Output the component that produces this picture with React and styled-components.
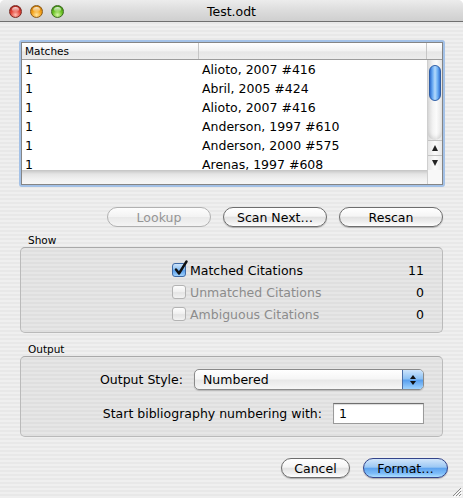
import React from "react";
import styled, { createGlobalStyle } from "styled-components";

const GlobalStyle = createGlobalStyle`
  html, body {
    margin: 0;
    padding: 0;
    background: #ffffff;
  }
`;

const Window = styled.div`
  position: relative;
  width: 463px;
  height: 498px;
  overflow: hidden;
  display: flex;
  flex-direction: column;
  border-radius: 5px 5px 0 0;
  font-family: "DejaVu Sans", "Liberation Sans", sans-serif;
  font-size: 12.5px;
  color: #000;
  background: repeating-linear-gradient(#efefef 0 2px, #e8e8e8 2px 4px);
`;

const TitleBar = styled.div`
  height: 21px;
  flex-shrink: 0;
  display: grid;
  grid-template-columns: 1fr auto 1fr;
  align-items: center;
  border-bottom: 1px solid #6f6f6f;
  background: linear-gradient(#ececec, #dcdcdc 50%, #cfcfcf);
`;

const Lights = styled.div`
  display: flex;
  gap: 8px;
  padding: 2px 0 0 9px;
`;

const lightColors = {
  red: ["#ffc0b4", "#e4473c", "#9c1910", "#7a2a24"],
  amber: ["#ffe6a0", "#f4a21a", "#b86a00", "#8a5a18"],
  green: ["#d8f7a8", "#6cc326", "#2f7d0a", "#3c6a1e"],
};

const Light = styled.span`
  position: relative;
  width: 13px;
  height: 13px;
  box-sizing: border-box;
  border-radius: 50%;
  border: 1px solid ${(p) => lightColors[p.$c][3]};
  background: radial-gradient(
    circle at 50% 80%,
    ${(p) => lightColors[p.$c][0]} 0,
    ${(p) => lightColors[p.$c][1]} 45%,
    ${(p) => lightColors[p.$c][2]} 100%
  );
  &::after {
    content: "";
    position: absolute;
    left: 2px;
    right: 2px;
    top: 1px;
    height: 5px;
    border-radius: 50%;
    background: linear-gradient(rgba(255, 255, 255, 0.85), rgba(255, 255, 255, 0.1));
  }
`;

const Title = styled.div`
  font-size: 12.5px;
  padding-top: 1px;
`;

const ListFrame = styled.div`
  margin: 18px 0 0 19px;
  width: 426px;
  height: 147px;
  box-sizing: border-box;
  border: 2px solid #a3c1e7;
  border-radius: 3px;
  flex-shrink: 0;
`;

const ListInner = styled.div`
  height: 100%;
  box-sizing: border-box;
  border: 1px solid #858585;
  background: #fff;
  display: flex;
  flex-direction: column;
`;

const HeaderRow = styled.div`
  display: grid;
  grid-template-columns: 177px 1fr 15px;
  height: 16px;
  border-bottom: 1px solid #9c9c9c;
  background: linear-gradient(#ffffff, #f1f1f1 50%, #e6e6e6 55%, #ececec);
  font-size: 10.5px;
  line-height: 16px;
`;

const HeaderCell = styled.div`
  padding-left: 3px;
  border-right: ${(p) => (p.$last ? "none" : "1px solid #c6c6c6")};
`;

const ListBody = styled.div`
  height: 110px;
  display: flex;
`;

const Rows = styled.div`
  flex: 1;
  overflow: hidden;
`;

const Row = styled.div`
  display: grid;
  grid-template-columns: 177px 1fr;
  height: 19px;
  line-height: 19px;
`;

const Cell = styled.div`
  padding-left: 3px;
  white-space: nowrap;
`;

const Scrollbar = styled.div`
  width: 15px;
  display: flex;
  flex-direction: column;
  border-left: 1px solid #cfcfcf;
  box-sizing: border-box;
  background: linear-gradient(90deg, #d9d9d9, #f3f3f3 35%, #fbfbfb 60%, #e4e4e4);
`;

const Thumb = styled.div`
  margin: 5px 1px 0 1px;
  height: 36px;
  box-sizing: border-box;
  border-radius: 7px;
  border: 1px solid #2f5fa8;
  background: linear-gradient(
    90deg,
    #2f6fd0,
    #6aaaf2 25%,
    #b4dafc 50%,
    #6fb0f4 75%,
    #3474d4
  );
`;

const Track = styled.div`
  flex: 1;
  border-bottom-left-radius: 7px;
  border-bottom-right-radius: 7px;
  box-shadow: inset 0 -4px 4px -2px rgba(0, 0, 0, 0.12);
`;

const ArrowBox = styled.div`
  height: 15px;
  display: flex;
  align-items: center;
  justify-content: center;
  border-top: 1px solid #c2c2c2;
  box-sizing: border-box;
  background: linear-gradient(90deg, #e6e6e6, #fbfbfb 50%, #e8e8e8);
  &::before {
    content: "";
    border-left: 3.5px solid transparent;
    border-right: 3.5px solid transparent;
    ${(p) =>
      p.$dir === "up"
        ? "border-bottom: 6px solid #222;"
        : "border-top: 6px solid #222;"}
  }
`;

const BottomBand = styled.div`
  height: 14px;
  display: grid;
  grid-template-columns: 1fr 15px;
`;

const BandTrack = styled.div`
  background: linear-gradient(#c4c4c4, #e4e4e4 4px, #f1f1f1 9px, #f6f6f6);
`;

const BandCorner = styled.div`
  border-left: 1px solid #cfcfcf;
  background: #f8f8f8;
`;

const ButtonRow = styled.div`
  display: flex;
  justify-content: flex-end;
  gap: ${(p) => p.$gap}px;
  padding-right: ${(p) => p.$right}px;
  margin-top: ${(p) => p.$top}px;
  flex-shrink: 0;
`;

const AquaButton = styled.div`
  width: ${(p) => p.$w}px;
  height: 20px;
  box-sizing: border-box;
  border-radius: 10px;
  display: flex;
  align-items: center;
  justify-content: center;
  font-size: 12.5px;
  color: ${(p) => (p.$disabled ? "#959595" : "#000")};
  border: 1px solid
    ${(p) => (p.$default ? "#34448a" : p.$disabled ? "#b1b1b1" : "#6e6e6e")};
  background: ${(p) =>
    p.$default
      ? "linear-gradient(#d2e6fb, #9cc8f4 45%, #5fa4ef 52%, #7dbcf8 80%, #aee0ff)"
      : p.$disabled
      ? "linear-gradient(#fdfdfd, #f3f3f3 48%, #e9e9e9 52%, #f4f4f4)"
      : "linear-gradient(#ffffff, #f5f5f5 45%, #e2e2e2 52%, #f0f0f0 80%, #ffffff)"};
  box-shadow: ${(p) =>
    p.$disabled ? "none" : "0 1px 1px rgba(0, 0, 0, 0.25)"};
`;

const GroupLabel = styled.div`
  margin: ${(p) => p.$top}px 0 0 28px;
  height: 13px;
  line-height: 13px;
  font-size: 10.5px;
  flex-shrink: 0;
`;

const Group = styled.div`
  margin: 0 20px;
  height: ${(p) => p.$h}px;
  box-sizing: border-box;
  border: 1px solid #bababa;
  border-top-color: #a9a9a9;
  border-radius: 5px;
  background: rgba(0, 0, 0, 0.035);
  flex-shrink: 0;
`;

const ShowGrid = styled.div`
  display: grid;
  grid-template-columns: 1fr auto;
  grid-auto-rows: 22px;
  align-items: center;
  padding: 11px 18px 0 151px;
`;

const CheckRow = styled.div`
  display: flex;
  align-items: center;
  gap: 4px;
  color: ${(p) => (p.$disabled ? "#8c8c8c" : "#000")};
`;

const Box = styled.span`
  position: relative;
  width: 14px;
  height: 14px;
  box-sizing: border-box;
  border-radius: 3px;
  border: 1px solid ${(p) => (p.$checked ? "#3f6aa6" : "#b3b3b3")};
  background: ${(p) =>
    p.$checked
      ? "linear-gradient(#cfe5fb, #8cc0f2 45%, #5a9fec 55%, #9fd0fb)"
      : "linear-gradient(#fdfdfd, #efefef 50%, #e4e4e4 55%, #f2f2f2)"};
`;

const CheckMark = styled.svg`
  position: absolute;
  left: 1px;
  top: -4px;
`;

const Count = styled.div`
  text-align: right;
`;

const OutputRows = styled.div`
  display: flex;
  flex-direction: column;
  gap: 13px;
  padding: 12px 18px 0 0;
`;

const FieldRow = styled.div`
  display: flex;
  justify-content: flex-end;
  align-items: center;
  gap: 11px;
  height: 21px;
`;

const Popup = styled.div`
  width: 230px;
  height: 21px;
  box-sizing: border-box;
  border: 1px solid #8a8a8a;
  border-radius: 5px;
  display: flex;
  overflow: hidden;
  background: linear-gradient(#ffffff, #f6f6f6 45%, #e8e8e8 55%, #f6f6f6);
  box-shadow: 0 1px 1px rgba(0, 0, 0, 0.18);
`;

const PopupText = styled.div`
  flex: 1;
  padding-left: 8px;
  line-height: 19px;
`;

const Stepper = styled.div`
  width: 20px;
  border-left: 1px solid #4b6fa8;
  display: flex;
  flex-direction: column;
  align-items: center;
  justify-content: center;
  gap: 2px;
  background: linear-gradient(#cde4fb, #8ec2f4 45%, #5aa0ee 55%, #9fd3ff);
  &::before,
  &::after {
    content: "";
    border-left: 3px solid transparent;
    border-right: 3px solid transparent;
  }
  &::before {
    border-bottom: 4px solid #111;
  }
  &::after {
    border-top: 4px solid #111;
  }
`;

const NumberInput = styled.div`
  width: 91px;
  height: 21px;
  box-sizing: border-box;
  border: 1px solid #9a9a9a;
  border-top-color: #6f6f6f;
  background: #fff;
  box-shadow: inset 0 1px 1px rgba(0, 0, 0, 0.15);
  padding-left: 5px;
  line-height: 19px;
`;

const Grip = styled.svg`
  position: absolute;
  right: 1px;
  bottom: 1px;
`;

const rows = [
  ["1", "Alioto, 2007 #416"],
  ["1", "Abril, 2005 #424"],
  ["1", "Alioto, 2007 #416"],
  ["1", "Anderson, 1997 #610"],
  ["1", "Anderson, 2000 #575"],
  ["1", "Arenas, 1997 #608"],
];

const citations = [
  { label: "Matched Citations", count: 11, checked: true },
  { label: "Unmatched Citations", count: 0, disabled: true },
  { label: "Ambiguous Citations", count: 0, disabled: true },
];

const App = () => {
  return (
    <Window>
      <GlobalStyle />
      <TitleBar>
        <Lights>
          <Light $c="red" />
          <Light $c="amber" />
          <Light $c="green" />
        </Lights>
        <Title>Test.odt</Title>
        <div />
      </TitleBar>

      <ListFrame>
        <ListInner>
          <HeaderRow>
            <HeaderCell>Matches</HeaderCell>
            <HeaderCell />
            <HeaderCell $last />
          </HeaderRow>
          <ListBody>
            <Rows>
              {rows.map(([n, ref], i) => (
                <Row key={i}>
                  <Cell>{n}</Cell>
                  <Cell>{ref}</Cell>
                </Row>
              ))}
            </Rows>
            <Scrollbar>
              <Thumb />
              <Track />
              <ArrowBox $dir="up" />
              <ArrowBox $dir="down" />
            </Scrollbar>
          </ListBody>
          <BottomBand>
            <BandTrack />
            <BandCorner />
          </BottomBand>
        </ListInner>
      </ListFrame>

      <ButtonRow $top={20} $gap={12} $right={20}>
        <AquaButton $w={104} $disabled>
          Lookup
        </AquaButton>
        <AquaButton $w={104}>Scan Next…</AquaButton>
        <AquaButton $w={104}>Rescan</AquaButton>
      </ButtonRow>

      <GroupLabel $top={7}>Show</GroupLabel>
      <Group $h={86}>
        <ShowGrid>
          {citations.map((c) => (
            <React.Fragment key={c.label}>
              <CheckRow $disabled={c.disabled}>
                <Box $checked={c.checked}>
                  {c.checked && (
                    <CheckMark width="14" height="16" viewBox="0 0 14 16">
                      <path
                        d="M2 9.5 L5 13.5 L12.5 1.5"
                        fill="none"
                        stroke="#111"
                        strokeWidth="2.4"
                        strokeLinecap="round"
                        strokeLinejoin="round"
                      />
                    </CheckMark>
                  )}
                </Box>
                {c.label}
              </CheckRow>
              <Count>{c.count}</Count>
            </React.Fragment>
          ))}
        </ShowGrid>
      </Group>

      <GroupLabel $top={10}>Output</GroupLabel>
      <Group $h={81}>
        <OutputRows>
          <FieldRow>
            Output Style:
            <Popup>
              <PopupText>Numbered</PopupText>
              <Stepper />
            </Popup>
          </FieldRow>
          <FieldRow>
            Start bibliography numbering with:
            <NumberInput>1</NumberInput>
          </FieldRow>
        </OutputRows>
      </Group>

      <ButtonRow $top={21} $gap={13} $right={15}>
        <AquaButton $w={69}>Cancel</AquaButton>
        <AquaButton $w={85} $default>
          Format…
        </AquaButton>
      </ButtonRow>

      <Grip width="11" height="11" viewBox="0 0 11 11">
        <path d="M10 2 L2 10 M10 5 L5 10 M10 8 L8 10" stroke="#8a8a8a" strokeWidth="1" />
        <path d="M11 3 L3 11 M11 6 L6 11 M11 9 L9 11" stroke="#ffffff" strokeWidth="1" />
      </Grip>
    </Window>
  );
};

export default App;
